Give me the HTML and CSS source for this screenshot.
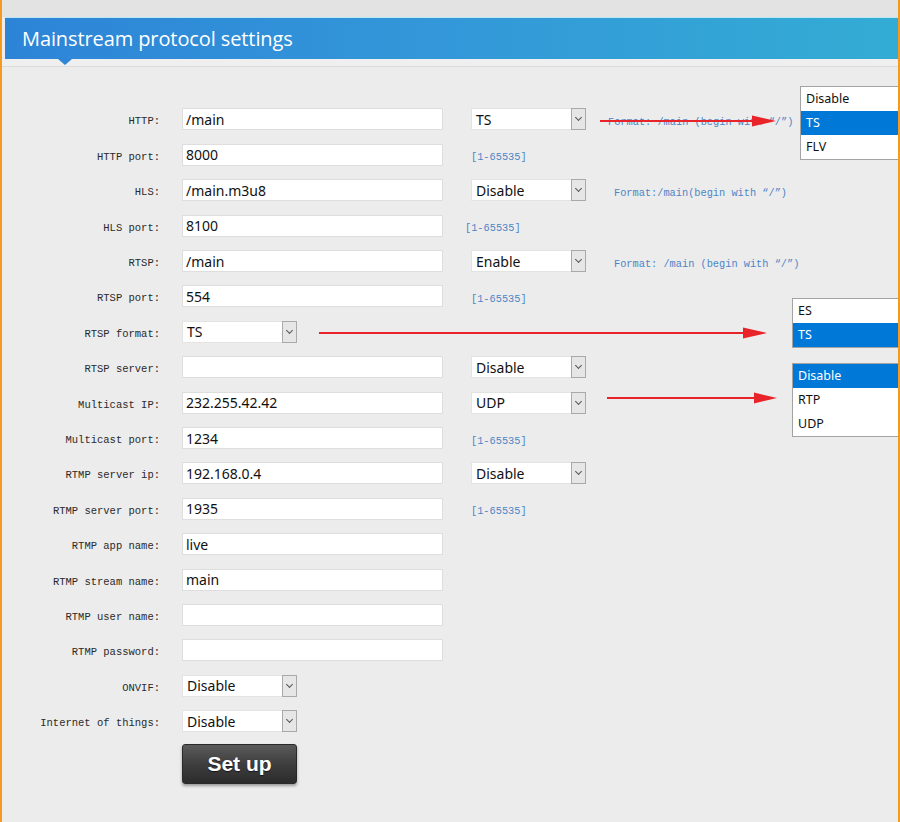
FILE: index.html
```html
<!DOCTYPE html>
<html>
<head>
<meta charset="utf-8">
<title>Mainstream protocol settings</title>
<link rel="stylesheet" href="styles.css">
</head>
<body>
<div class="frame">
  <div class="topstrip"></div>
  <div class="header"><h1>Mainstream protocol settings</h1></div>
  <div class="rule"></div>

  <form class="grid">
    <label>HTTP:</label>
    <input class="txt" value="/main">
    <div class="extra"><div class="sel"><span>TS</span><i class="arr"></i></div><span class="hint hint-http">Format: /main (begin with “/”)</span></div>

    <label>HTTP port:</label>
    <input class="txt" value="8000">
    <div class="extra"><span class="hint">[1-65535]</span></div>

    <label>HLS:</label>
    <input class="txt" value="/main.m3u8">
    <div class="extra"><div class="sel"><span>Disable</span><i class="arr"></i></div><span class="hint hint-fmt">Format:/main(begin with “/”)</span></div>

    <label>HLS port:</label>
    <input class="txt" value="8100">
    <div class="extra"><span class="hint hint-left">[1-65535]</span></div>

    <label>RTSP:</label>
    <input class="txt" value="/main">
    <div class="extra"><div class="sel"><span>Enable</span><i class="arr"></i></div><span class="hint hint-fmt">Format: /main (begin with “/”)</span></div>

    <label>RTSP port:</label>
    <input class="txt" value="554">
    <div class="extra"><span class="hint">[1-65535]</span></div>

    <label>RTSP format:</label>
    <div class="cell"><div class="sel"><span>TS</span><i class="arr"></i></div></div>
    <div class="extra"></div>

    <label>RTSP server:</label>
    <input class="txt" value="">
    <div class="extra"><div class="sel"><span>Disable</span><i class="arr"></i></div></div>

    <label>Multicast IP:</label>
    <input class="txt" value="232.255.42.42">
    <div class="extra"><div class="sel"><span>UDP</span><i class="arr"></i></div></div>

    <label>Multicast port:</label>
    <input class="txt" value="1234">
    <div class="extra"><span class="hint">[1-65535]</span></div>

    <label>RTMP server ip:</label>
    <input class="txt" value="192.168.0.4">
    <div class="extra"><div class="sel"><span>Disable</span><i class="arr"></i></div></div>

    <label>RTMP server port:</label>
    <input class="txt" value="1935">
    <div class="extra"><span class="hint">[1-65535]</span></div>

    <label>RTMP app name:</label>
    <input class="txt" value="live">
    <div class="extra"></div>

    <label>RTMP stream name:</label>
    <input class="txt" value="main">
    <div class="extra"></div>

    <label>RTMP user name:</label>
    <input class="txt" value="">
    <div class="extra"></div>

    <label>RTMP password:</label>
    <input class="txt" value="">
    <div class="extra"></div>

    <label>ONVIF:</label>
    <div class="cell"><div class="sel"><span>Disable</span><i class="arr"></i></div></div>
    <div class="extra"></div>

    <label>Internet of things:</label>
    <div class="cell"><div class="sel"><span>Disable</span><i class="arr"></i></div></div>
    <div class="extra"></div>

    <div></div>
    <div class="cell"><button type="button" class="btn">Set up</button></div>
  </form>

  <ul class="menu menu-http">
    <li>Disable</li>
    <li class="on">TS</li>
    <li>FLV</li>
  </ul>
  <ul class="menu menu-fmt">
    <li>ES</li>
    <li class="on">TS</li>
  </ul>
  <ul class="menu menu-mc">
    <li class="on">Disable</li>
    <li>RTP</li>
    <li>UDP</li>
  </ul>

  <svg class="notes" width="900" height="822" viewBox="0 0 900 822">
    <g fill="#e8232a" stroke="#e8232a">
      <line x1="600" y1="121" x2="756" y2="121" stroke-width="2"/>
      <polygon points="752,115.5 776,121 752,126.5" stroke="none"/>
      <line x1="319" y1="333" x2="746" y2="333" stroke-width="2"/>
      <polygon points="743,327.5 767,333 743,338.5" stroke="none"/>
      <line x1="607" y1="398" x2="757" y2="398" stroke-width="2"/>
      <polygon points="754,392.5 777,398 754,403.5" stroke="none"/>
    </g>
  </svg>
</div>
</body>
</html>
```
FILE: styles.css
```css
* { box-sizing: border-box; }
html, body { margin: 0; padding: 0; }
body { width: 900px; height: 822px; overflow: hidden; background: #ececec; }

.frame {
  position: relative;
  width: 900px;
  height: 822px;
  background: #ececec;
  border-left: 2px solid #f29a22;
  border-right: 2px solid #f29a22;
}

.topstrip { height: 17px; background: #e3e3e3; }

.header {
  position: relative;
  margin-left: 3px;
  height: 42px;
  border-top: 1px solid #bfe6f4;
  background: linear-gradient(to right, #2d84d7, #3398d9 50%, #33acd4);
}
.header::after {
  content: "";
  position: absolute;
  left: 53px;
  bottom: -6px;
  border-top: 6px solid #2f86d6;
  border-left: 7px solid transparent;
  border-right: 7px solid transparent;
}
.header h1 {
  margin: 0;
  padding-left: 17px;
  font-family: "Open Sans", "Noto Sans", sans-serif;
  font-weight: 400;
  font-size: 20px;
  line-height: 42px;
  color: #ffffff;
  letter-spacing: -0.1px;
}

.rule {
  height: 8px;
  background: #efefef;
  border-bottom: 1px solid #dcdcdc;
}

.grid {
  display: grid;
  grid-template-columns: 158px 261px 1fr;
  grid-auto-rows: 35.4px;
  column-gap: 22px;
  margin: 0;
  padding-top: 34.8px;
  align-items: center;
}

.grid label {
  text-align: right;
  font-family: "Liberation Mono", "DejaVu Sans Mono", monospace;
  font-size: 10.5px;
  color: #2a2a2a;
  white-space: nowrap;
  padding-top: 4px;
}

.txt {
  width: 261px;
  height: 22px;
  margin: 0;
  padding: 0 0 0 3px;
  border: 1px solid #dedede;
  background: #fff;
  font-family: "Noto Sans", "Open Sans", sans-serif;
  font-size: 14px;
  color: #111;
  outline: none;
}

.cell { display: flex; align-items: center; }

.extra {
  display: flex;
  align-items: center;
  padding-left: 6px;
  height: 100%;
}

.sel {
  position: relative;
  display: flex;
  align-items: center;
  width: 115px;
  height: 22px;
  background: #fff;
  border: 1px solid #e3e3e3;
  font-family: "Noto Sans", "Open Sans", sans-serif;
  font-size: 14px;
  color: #111;
  padding-left: 4px;
}
.arr {
  position: absolute;
  right: -1px;
  top: -1px;
  width: 15px;
  height: 22px;
  background: #e6e6e6;
  border: 1px solid #a9a9a9;
}
.arr::after {
  content: "";
  position: absolute;
  left: 4px;
  top: 6px;
  width: 4px;
  height: 4px;
  border-right: 1px solid #555;
  border-bottom: 1px solid #555;
  transform: rotate(45deg);
}

.hint {
  font-family: "Liberation Mono", "DejaVu Sans Mono", monospace;
  font-size: 10.3px;
  color: #4c85c6;
  white-space: nowrap;
  padding-top: 5px;
}
.hint-http { margin-left: 22px; }
.hint-fmt { margin-left: 28px; }
.hint-left { margin-left: -6px; }

.btn {
  margin-top: 14px;
  width: 115px;
  height: 40px;
  border: 1px solid #2a2a2a;
  border-radius: 3px;
  background: linear-gradient(to bottom, #5a5a5a, #3c3c3c 55%, #2c2c2c);
  box-shadow: 0 2px 3px rgba(0,0,0,0.35);
  color: #fff;
  font-family: "Liberation Sans", Arial, sans-serif;
  font-weight: bold;
  font-size: 21px;
  text-shadow: 0 1px 1px rgba(0,0,0,0.6);
  padding: 0;
}

.menu {
  position: absolute;
  margin: 0;
  padding: 0;
  list-style: none;
  background: #fff;
  border: 1px solid #a3a3a3;
  border-right: none;
  font-family: "Noto Sans", "Open Sans", sans-serif;
  font-size: 12.5px;
  color: #111;
}
.menu li {
  height: 24px;
  line-height: 24px;
  padding-left: 5px;
}
.menu li.on { background: #0078d7; color: #fff; }
.menu-http { left: 798px; top: 86px; width: 98px; }
.menu-fmt { left: 790px; top: 298px; width: 106px; }
.menu-mc { left: 790px; top: 363px; width: 106px; }

.notes {
  position: absolute;
  left: -2px;
  top: 0;
  pointer-events: none;
}
```
